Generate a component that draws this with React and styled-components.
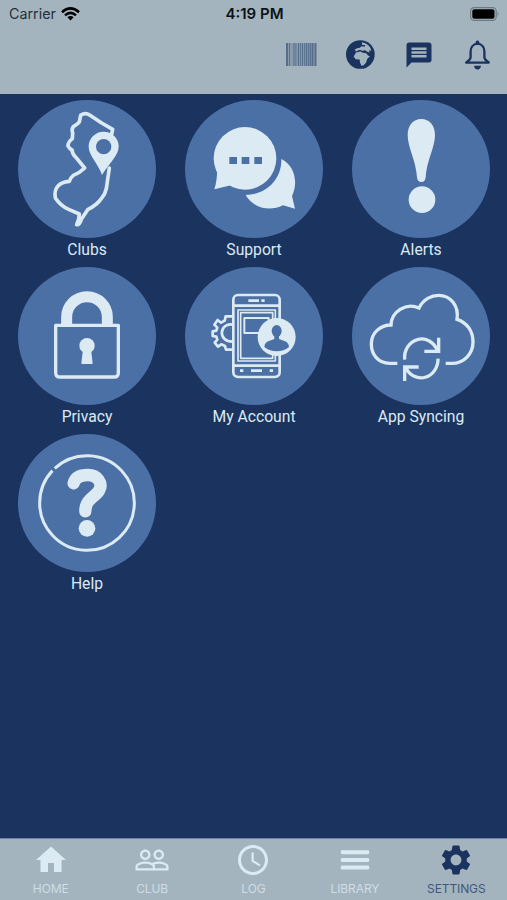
import { useState } from 'react';
import styled, { createGlobalStyle } from 'styled-components';
import { MdHome, MdPeopleOutline, MdAccessTime, MdSettings, MdMessage } from 'react-icons/md';

const NAVY = '#1b335f';
const BLUE = '#4b70a6';
const LIGHT = '#dceaf3';
const BAR = '#a4b4be';

const bars = [
    [0, 2], [3, 0.8], [7.5, 1], [9.5, 0.8], [12, 1], [14, 0.8], [16, 1],
    [18, 0.8], [19.8, 1.4], [22, 0.8], [23.6, 1.2], [25.6, 1.8], [28.6, 1.6],
];

const BarcodeIcon = () => (
    <svg width="31" height="23" viewBox="0 0 31 23" fill="#2f4872">
        <rect width="31" height="23" opacity="0.25" />
        {bars.map(([x, w]) => <rect key={x} x={x} width={w} height="23" opacity="0.55" />)}
    </svg>
);

const GlobeIcon = () => (
    <svg width="29" height="29" viewBox="197 18.5 87 87">
        <circle cx="240" cy="62" r="43" fill={NAVY} />
        <g fill={BAR}>
            <path d="M245 25 Q262 28 270 42 L273 51 L266 49 L268 56 L261 54 L254 49 L246 51 L238 48 L227 53 L223 48 L230 43 L239 42 L243 37 L253 39 L255 34 L245 33 Z" />
            <path d="M227 56 L240 53 L248 57 L258 58 L263 65 L269 67 L261 75 L257 87 L249 95 L243 96 L239 86 L238 77 L226 76 L220 68 Z" />
        </g>
    </svg>
);

const BellIcon = () => (
    <svg width="27" height="30" viewBox="0 0 27 30" fill="none" stroke={NAVY} strokeWidth="2.3" strokeLinejoin="round">
        <path d="M13.5 3.6 C8.6 4 6.6 8 6.6 11.6 V17.4 Q6.4 20 2.2 22.6 H24.8 Q20.6 20 20.4 17.4 V11.6 C20.4 8 18.4 4 13.5 3.6 Z" />
        <path d="M11.6 3.6 Q11.4 0.4 13.5 0.4 Q15.6 0.4 15.4 3.6 Z" fill={NAVY} stroke="none" />
        <path d="M10 25.8 H17 Q16.6 29.4 13.5 29.4 Q10.4 29.4 10 25.8 Z" fill={NAVY} stroke="none" />
    </svg>
);

const MenuIcon = () => (
    <svg width="36" height="36" viewBox="0 0 36 36" fill="currentColor">
        <rect x="3.8" y="8.2" width="28.4" height="4" rx="1.4" />
        <rect x="3.8" y="15.9" width="28.4" height="4" rx="1.4" />
        <rect x="3.8" y="23.6" width="28.4" height="4" rx="1.4" />
    </svg>
);

const ClubsIcon = () => (
    <Drawing viewBox="24 18 414 414">
        <path
            d="M305 120 L308 106 L275 87 L240 64 Q226 54 212 64 L208 84 Q204 90 190 98 Q184 106 188 118 L187 134 Q174 144 174 156 Q178 164 186 168 Q188 182 196 188 L224 222 Q210 236 190 244 Q180 252 178 262 Q154 264 144 276 Q132 288 136 312 Q152 336 176 346 L208 360 Q208 374 200 392 Q208 394 214 376 L234 346 Q260 334 274 314 Q286 300 289 284 L298 222"
            strokeWidth="11"
        />
        <path
            d="M281 113 A45 45 0 0 1 326 158 C326 184 296 210 276 243 C264 208 236 184 236 158 A45 45 0 0 1 281 113 Z"
            fill={LIGHT}
            stroke="none"
        />
        <circle cx="281" cy="158" r="23" fill={BLUE} stroke="none" />
    </Drawing>
);

const SupportIcon = () => (
    <Drawing viewBox="24 18 414 414">
        <g fill={LIGHT} stroke="none">
            <circle cx="204" cy="193" r="94" />
            <path d="M120 230 Q121 256 112 286 L168 272 Z" />
            <path d="M313 195 C350 212 366 262 345 306 L354 344 L318 334 C280 353 230 345 206 303 C262 302 314 262 313 195 Z" />
        </g>
        <g fill={BLUE} stroke="none">
            <rect x="157" y="189" width="23" height="21" />
            <rect x="194" y="189" width="23" height="21" />
            <rect x="232" y="189" width="23" height="21" />
        </g>
    </Drawing>
);

const AlertsIcon = () => (
    <Drawing viewBox="24 18 414 414">
        <g fill={LIGHT} stroke="none">
            <path d="M232 75 C257 75 273 94 273 124 C273 160 248 200 245 250 Q244 264 232 264 Q220 264 219 250 C216 200 191 160 191 124 C191 94 207 75 232 75 Z" />
            <circle cx="234" cy="317" r="40" />
        </g>
    </Drawing>
);

const PrivacyIcon = () => (
    <Drawing viewBox="24 15 414 414">
        <path d="M170 188 V165 A61 61 0 0 1 292 165 V188" strokeWidth="33" strokeLinecap="butt" />
        <path d="M137 190 H325 V332 Q325 345 312 345 H150 Q137 345 137 332 Z" strokeWidth="10" />
        <g fill={LIGHT} stroke="none">
            <circle cx="231" cy="251" r="23" />
            <path d="M219 262 H243 L248 304 Q248 306 245 306 H217 Q214 306 214 304 Z" />
        </g>
    </Drawing>
);

const AccountIcon = () => (
    <Drawing viewBox="24 15 414 414" strokeLinecap="butt">
        <g strokeWidth="8">
            <path d="M168 163 H146 L143 176 L132 182 L122 174 L112 188 L121 197 L118 206 L107 208 V222 L118 224 L121 233 L113 242 L123 254 L133 247 L144 252 L147 263 H168" />
            <path d="M168 188 C127 180 120 240 168 239" />
            <rect x="169" y="99" width="139" height="246" rx="14" />
            <path d="M169 131 H308 M169 311 H308" />
            <rect x="183" y="144" width="112" height="153" strokeWidth="5" />
            <rect x="191" y="152" width="96" height="137" strokeWidth="5" />
            <rect x="202" y="168" width="73" height="45" strokeWidth="6" />
            <path d="M214 116 H246 M253 116 H263 M222 326 H255 M189 326 H199 M278 326 H288" />
        </g>
        <circle cx="299" cy="225" r="57" fill={LIGHT} stroke="none" />
        <g fill={BLUE} stroke="none">
            <ellipse cx="299" cy="207" rx="15" ry="18" />
            <path d="M292 218 V231 L276 237 Q263 241 262 255 Q279 268 299 268 Q320 268 336 255 Q335 241 322 237 L306 231 V218 Z" />
        </g>
    </Drawing>
);

const SyncIcon = () => (
    <Drawing viewBox="24 15 414 414" strokeLinecap="butt" strokeLinejoin="miter">
        <g strokeWidth="10">
            <path d="M160 304 H137 C101 304 82 276 82 246 C82 211 110 189 141 189 C142 150 185 120 225 138 C238 112 262 100 284 100 C320 100 345 132 339 172 C370 182 387 208 387 240 C387 275 360 304 324 304 H305" />
            <path d="M182 293 A51 56 0 0 1 280 266" />
            <path d="M284 227 V268 H241" />
            <path d="M282 290 A51 56 0 0 1 186 318" />
            <path d="M182 357 V315 H224" />
        </g>
    </Drawing>
);

const HelpIcon = () => (
    <Drawing viewBox="24 15 414 414">
        <circle
            cx="231"
            cy="222"
            r="142"
            strokeWidth="9"
            strokeLinecap="butt"
            strokeDasharray="881 12"
            transform="rotate(227 231 222)"
        />
        <path d="M191 163 C196 143 215 138 234 138 C262 138 279 162 268 183 C258 204 226 208 226 247" strokeWidth="37" />
        <circle cx="231" cy="298" r="25" fill={LIGHT} stroke="none" />
    </Drawing>
);

const tiles = [
    { name: 'Clubs', Icon: ClubsIcon },
    { name: 'Support', Icon: SupportIcon },
    { name: 'Alerts', Icon: AlertsIcon },
    { name: 'Privacy', Icon: PrivacyIcon },
    { name: 'My Account', Icon: AccountIcon },
    { name: 'App Syncing', Icon: SyncIcon },
    { name: 'Help', Icon: HelpIcon },
];

const tabs = [
    { name: 'HOME', Icon: MdHome },
    { name: 'CLUB', Icon: MdPeopleOutline },
    { name: 'LOG', Icon: MdAccessTime },
    { name: 'LIBRARY', Icon: MenuIcon },
    { name: 'SETTINGS', Icon: MdSettings },
];

const App = () => {
    const [activeTab, setActiveTab] = useState('SETTINGS');

    return (
        <Screen>
            <GlobalStyle />
            <Header>
                <StatusBar>
                    <Carrier>
                        Carrier
                        <svg width="19" height="14" viewBox="0 0 19 14" fill="none" stroke="#000" strokeWidth="2.5">
                            <path d="M1 5.2 Q9.5 -2.4 18 5.2" />
                            <path d="M4 8.4 Q9.5 3.4 15 8.4" />
                            <path d="M6.4 10.2 Q9.5 7.6 12.6 10.2 L9.5 13.6 Z" fill="#000" stroke="none" />
                        </svg>
                    </Carrier>
                    <Clock>4:19 PM</Clock>
                    <Battery>
                        <svg width="30" height="14" viewBox="0 0 30 14">
                            <rect x="0.6" y="0.6" width="25.6" height="12.8" rx="3.6" fill="none" stroke="#6f7b82" strokeWidth="1.2" />
                            <rect x="2.3" y="2.3" width="22.2" height="9.4" rx="2" />
                            <path d="M27.6 4.6 Q29.6 7 27.6 9.4 Z" fill="#6f7b82" />
                        </svg>
                    </Battery>
                </StatusBar>
                <Toolbar>
                    <ToolButton aria-label="Barcode"><BarcodeIcon /></ToolButton>
                    <ToolButton aria-label="Web"><GlobeIcon /></ToolButton>
                    <ToolButton aria-label="Messages"><MdMessage size={30} /></ToolButton>
                    <ToolButton aria-label="Notifications"><BellIcon /></ToolButton>
                </Toolbar>
            </Header>
            <TileGrid>
                {tiles.map(({ name, Icon }) => (
                    <Tile key={name}>
                        <Disc><Icon /></Disc>
                        <TileLabel>{name}</TileLabel>
                    </Tile>
                ))}
            </TileGrid>
            <TabBar>
                {tabs.map(({ name, Icon }) => (
                    <Tab key={name} $active={name === activeTab} onClick={() => setActiveTab(name)}>
                        <Icon size={36} />
                        <TabLabel $active={name === activeTab}>{name}</TabLabel>
                    </Tab>
                ))}
            </TabBar>
        </Screen>
    );
};

export default App;

const GlobalStyle = createGlobalStyle`
  * {
    box-sizing: border-box;
  }
  body {
    margin: 0;
    background: ${NAVY};
  }
  button {
    padding: 0;
    border: 0;
    background: none;
    cursor: pointer;
  }
  svg {
    display: block;
    flex-shrink: 0;
  }
`;

const Screen = styled.div`
  display: flex;
  flex-direction: column;
  height: 100vh;
  background: ${NAVY};
  font-family: Inter, "Liberation Sans", sans-serif;
`;

const Header = styled.header`
  height: 94px;
  background: ${BAR};
`;

const StatusBar = styled.div`
  display: grid;
  grid-template-columns: 1fr auto 1fr;
  align-items: center;
  height: 27px;
  padding: 0 7px 0 9px;
  font-size: 14.3px;
  line-height: 17px;
`;

const Carrier = styled.div`
  display: flex;
  align-items: center;
  gap: 5px;
  color: #25303a;
`;

const Clock = styled.div`
  padding-top: 1px;
  color: #0b1116;
  font-size: 15px;
  line-height: 18px;
  font-weight: 600;
`;

const Battery = styled.div`
  display: flex;
  justify-content: flex-end;
`;

const Toolbar = styled.div`
  display: flex;
  justify-content: flex-end;
  height: 55px;
`;

const ToolButton = styled.button`
  display: flex;
  align-items: center;
  justify-content: center;
  width: 58.7px;
  color: ${NAVY};
`;

const TileGrid = styled.main`
  display: grid;
  grid-template-columns: repeat(3, 167px);
  grid-auto-rows: 167px;
  align-content: start;
  justify-content: center;
  flex: 1;
  padding-top: 6px;
`;

const Tile = styled.button`
  display: flex;
  flex-direction: column;
  align-items: center;
`;

const Disc = styled.div`
  width: 138px;
  height: 138px;
  border-radius: 50%;
  background: ${BLUE};
`;

const Drawing = styled.svg.attrs(props => ({
    fill: 'none',
    stroke: LIGHT,
    strokeLinecap: props.strokeLinecap || 'round',
    strokeLinejoin: props.strokeLinejoin || 'round',
}))`
  width: 138px;
  height: 138px;
`;

const TileLabel = styled.span`
  margin-top: 2px;
  padding-left: 1px;
  color: ${LIGHT};
  font-family: Roboto, sans-serif;
  font-size: 15.7px;
  line-height: 20px;
`;

const TabBar = styled.nav`
  display: grid;
  grid-template-columns: repeat(5, 1fr);
  height: 62px;
  border-top: 1px solid #6f86a1;
  background: ${BAR};
`;

const Tab = styled.button`
  display: flex;
  flex-direction: column;
  align-items: center;
  padding-top: 3px;
  color: ${props => (props.$active ? NAVY : LIGHT)};
`;

const TabLabel = styled.span`
  margin-top: 3px;
  color: ${props => (props.$active ? '#40577a' : '#cfdde6')};
  font-family: Inter, "Liberation Sans", sans-serif;
  font-size: 12px;
  line-height: 15px;
  letter-spacing: -0.1px;
`;
